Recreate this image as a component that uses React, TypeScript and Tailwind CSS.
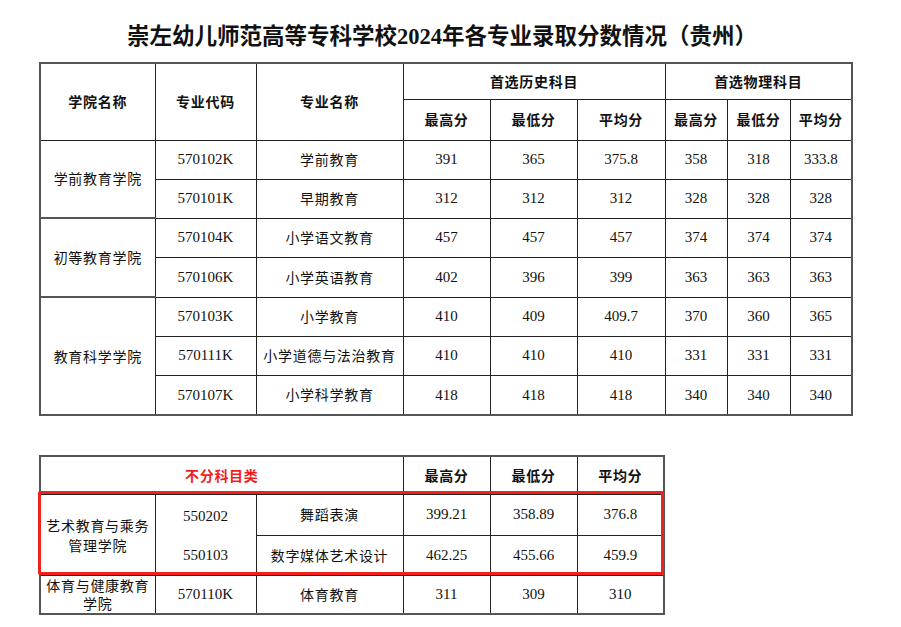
import React from "react";

const zh = "font-['Noto_Sans_CJK_SC',sans-serif] text-[14px] tracking-[0.7px]";
const num = "font-['Liberation_Serif','Noto_Sans_CJK_SC',serif] text-[15px]";
const cell = "border border-[#222] text-center align-middle p-0 text-[#111]";

const groups = [
  {
    college: "学前教育学院",
    rows: [
      ["570102K", "学前教育", "391", "365", "375.8", "358", "318", "333.8"],
      ["570101K", "早期教育", "312", "312", "312", "328", "328", "328"],
    ],
  },
  {
    college: "初等教育学院",
    rows: [
      ["570104K", "小学语文教育", "457", "457", "457", "374", "374", "374"],
      ["570106K", "小学英语教育", "402", "396", "399", "363", "363", "363"],
    ],
  },
  {
    college: "教育科学学院",
    rows: [
      ["570103K", "小学教育", "410", "409", "409.7", "370", "360", "365"],
      ["570111K", "小学道德与法治教育", "410", "410", "410", "331", "331", "331"],
      ["570107K", "小学科学教育", "418", "418", "418", "340", "340", "340"],
    ],
  },
];

const rowHeights = ["h-[39px]", "h-[39px]", "h-[39px]", "h-[40px]", "h-[39px]", "h-[39px]", "h-[40px]"];

const HeadCell = ({
  children,
  colSpan,
  rowSpan,
  red,
}: {
  children: React.ReactNode;
  colSpan?: number;
  rowSpan?: number;
  red?: boolean;
}) => (
  <th
    colSpan={colSpan}
    rowSpan={rowSpan}
    className={`${cell} ${zh} font-bold ${red ? "text-[#f21d1d]" : ""}`}
  >
    {children}
  </th>
);

export default function App() {
  let rowIndex = 0;

  return (
    <div className="w-[901px] h-[627px] bg-white overflow-hidden">
      <h1 className="pt-[26px] pl-[127px] mb-[14px] h-[48px] leading-[22px] whitespace-nowrap text-[22.5px] font-bold text-[#111] font-['Liberation_Serif','Noto_Sans_CJK_SC',serif]">
        崇左幼儿师范高等专科学校2024年各专业录取分数情况（贵州）
      </h1>

      <table className="ml-[39px] w-[812px] table-fixed border-collapse border-2 border-[#555]">
        <colgroup>
          <col className="w-[115px]" />
          <col className="w-[101px]" />
          <col className="w-[147px]" />
          <col className="w-[87px]" />
          <col className="w-[87px]" />
          <col className="w-[88px]" />
          <col className="w-[62px]" />
          <col className="w-[63px]" />
          <col className="w-[62px]" />
        </colgroup>
        <thead>
          <tr className="h-[36px]">
            <HeadCell rowSpan={2}>学院名称</HeadCell>
            <HeadCell rowSpan={2}>专业代码</HeadCell>
            <HeadCell rowSpan={2}>专业名称</HeadCell>
            <HeadCell colSpan={3}>首选历史科目</HeadCell>
            <HeadCell colSpan={3}>首选物理科目</HeadCell>
          </tr>
          <tr className="h-[41px]">
            <HeadCell>最高分</HeadCell>
            <HeadCell>最低分</HeadCell>
            <HeadCell>平均分</HeadCell>
            <HeadCell>最高分</HeadCell>
            <HeadCell>最低分</HeadCell>
            <HeadCell>平均分</HeadCell>
          </tr>
        </thead>
        <tbody>
          {groups.map((g) =>
            g.rows.map((r, i) => {
              const h = rowHeights[rowIndex++];
              return (
                <tr key={r[0]} className={h}>
                  {i === 0 && (
                    <td rowSpan={g.rows.length} className={`${cell} ${zh} border-b-2 border-b-[#555]`}>
                      {g.college}
                    </td>
                  )}
                  <td className={`${cell} ${num}`}>{r[0]}</td>
                  <td className={`${cell} ${zh}`}>{r[1]}</td>
                  {r.slice(2).map((v, j) => (
                    <td key={j} className={`${cell} ${num}`}>
                      {v}
                    </td>
                  ))}
                </tr>
              );
            })
          )}
        </tbody>
      </table>

      <div className="relative ml-[39px] mt-[39px] w-[624px]">
        <table className="w-[624px] table-fixed border-collapse border-2 border-[#555]">
          <colgroup>
            <col className="w-[115px]" />
            <col className="w-[101px]" />
            <col className="w-[147px]" />
            <col className="w-[87px]" />
            <col className="w-[87px]" />
            <col className="w-[87px]" />
          </colgroup>
          <tbody>
            <tr className="h-[38px]">
              <HeadCell colSpan={3} red>
                不分科目类
              </HeadCell>
              <HeadCell>最高分</HeadCell>
              <HeadCell>最低分</HeadCell>
              <HeadCell>平均分</HeadCell>
            </tr>
            <tr className="h-[41px]">
              <td rowSpan={2} className={`${cell} ${zh} leading-[20px]`}>
                艺术教育与乘务
                <br />
                管理学院
              </td>
              <td rowSpan={2} className={`${cell} ${num}`}>
                <div className="flex flex-col">
                  <span className="h-[40px] leading-[40px]">550202</span>
                  <span className="h-[38px] leading-[38px]">550103</span>
                </div>
              </td>
              <td className={`${cell} ${zh}`}>舞蹈表演</td>
              <td className={`${cell} ${num}`}>399.21</td>
              <td className={`${cell} ${num}`}>358.89</td>
              <td className={`${cell} ${num}`}>376.8</td>
            </tr>
            <tr className="h-[40px]">
              <td className={`${cell} ${zh}`}>数字媒体艺术设计</td>
              <td className={`${cell} ${num}`}>462.25</td>
              <td className={`${cell} ${num}`}>455.66</td>
              <td className={`${cell} ${num}`}>459.9</td>
            </tr>
            <tr className="h-[39px]">
              <td className={`${cell} ${zh} leading-[18px]`}>
                体育与健康教育
                <br />
                学院
              </td>
              <td className={`${cell} ${num}`}>570110K</td>
              <td className={`${cell} ${zh}`}>体育教育</td>
              <td className={`${cell} ${num}`}>311</td>
              <td className={`${cell} ${num}`}>309</td>
              <td className={`${cell} ${num}`}>310</td>
            </tr>
          </tbody>
        </table>
        <div className="absolute left-[-1px] top-[36px] w-[626px] h-[84px] border-[3px] border-[#f0201a] rounded-[2px] pointer-events-none" />
      </div>
    </div>
  );
}
